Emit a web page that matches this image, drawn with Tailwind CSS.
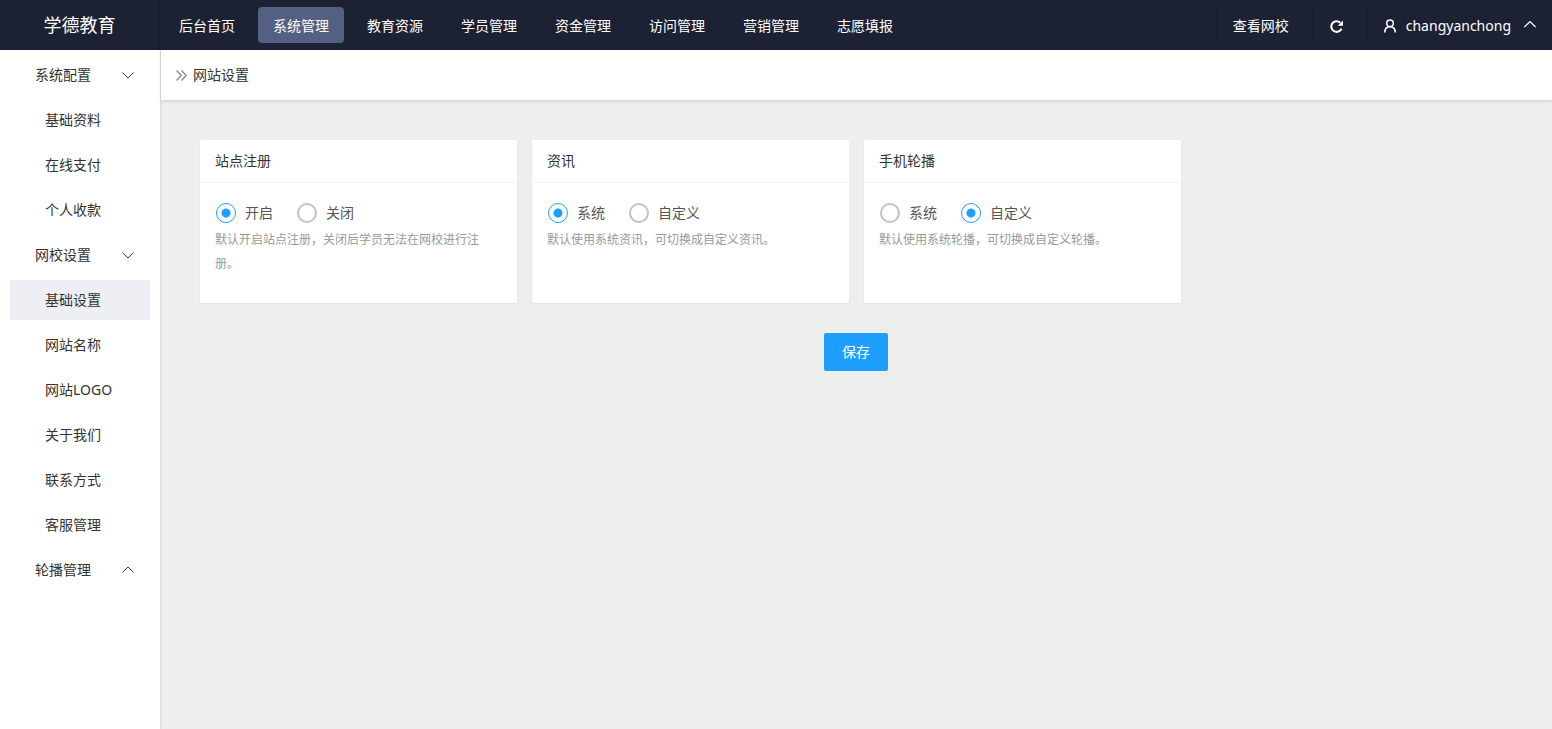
<!DOCTYPE html>
<html lang="zh-CN">
<head>
<meta charset="utf-8">
<meta name="viewport" content="width=device-width, initial-scale=1">
<title>网站设置</title>
<script src="https://cdn.jsdelivr.net/npm/@tailwindcss/browser@4"></script>
</head>
<body class="flex min-h-screen flex-col bg-[#eee] font-['Noto_Sans','Noto_Sans_CJK_SC',sans-serif] text-sm text-[#333]">
<header class="flex h-[50px] items-stretch bg-[#1d2134] text-white">
  <a href="#" class="flex w-40 shrink-0 items-center justify-center border-r border-[#181c2c] text-lg">学德教育</a>
  <nav class="flex flex-1 items-center gap-2 pl-1">
    <a href="#" class="flex h-9 items-center rounded-sm px-[15px] pt-[2px]">后台首页</a>
    <a href="#" aria-current="page" class="flex h-9 items-center rounded-sm bg-[#536081] px-[15px] pt-[2px]">系统管理</a>
    <a href="#" class="flex h-9 items-center rounded-sm px-[15px] pt-[2px]">教育资源</a>
    <a href="#" class="flex h-9 items-center rounded-sm px-[15px] pt-[2px]">学员管理</a>
    <a href="#" class="flex h-9 items-center rounded-sm px-[15px] pt-[2px]">资金管理</a>
    <a href="#" class="flex h-9 items-center rounded-sm px-[15px] pt-[2px]">访问管理</a>
    <a href="#" class="flex h-9 items-center rounded-sm px-[15px] pt-[2px]">营销管理</a>
    <a href="#" class="flex h-9 items-center rounded-sm px-[15px] pt-[2px]">志愿填报</a>
  </nav>
  <div class="flex items-center">
    <a href="#" class="flex h-9 items-center border-l border-[#181c2c] pl-[15px] pr-6 pt-[2px]">查看网校</a>
    <button type="button" aria-label="刷新" class="flex h-9 items-center border-l border-[#181c2c] pl-4 pr-6 pt-[2px]">
      <svg class="size-[13px]" viewBox="0 0 14 14" fill="none" stroke="currentColor" stroke-width="2.200"><path d="M12.400 9.200A5.700 5.700 0 1 1 11 2.900"/><path d="M14 .6V6.200H8.400Z" fill="currentColor" stroke="none"/></svg>
    </button>
    <button type="button" class="flex h-9 items-center border-l border-[#181c2c] px-4 pt-[2px]">
      <svg class="mr-[10px] h-[14px] w-3" viewBox="0 0 12 14" fill="none" stroke="currentColor" stroke-width="1.500"><circle cx="6" cy="4.200" r="3.300"/><path d="M.8 13.400C.8 9.800 3 7.700 6 7.700S11.200 9.800 11.200 13.400"/></svg>
      <span>changyanchong</span>
      <svg class="ml-[13px] h-[14px] w-3" viewBox="0 0 12 14" fill="none" stroke="currentColor" stroke-width="1.200"><path d="M.4 8 6 2.500l5.600 5.500"/></svg>
    </button>
  </div>
</header>
<div class="flex flex-1">
  <aside class="w-40 shrink-0 bg-white px-[10px] pt-[5px] shadow-[1px_0_2px_rgba(0,0,0,0.1)]">
    <nav class="flex flex-col gap-[5px]">
      <button type="button" aria-expanded="true" class="flex h-10 items-center justify-between pl-[25px] pr-4">系统配置
        <svg class="h-[14px] w-3" viewBox="0 0 12 14" fill="none" stroke="currentColor"><path d="M.4 4.500 6 10l5.600-5.500"/></svg></button>
      <a href="#" class="flex h-10 items-center pl-[35px]">基础资料</a>
      <a href="#" class="flex h-10 items-center pl-[35px]">在线支付</a>
      <a href="#" class="flex h-10 items-center pl-[35px]">个人收款</a>
      <button type="button" aria-expanded="true" class="flex h-10 items-center justify-between pl-[25px] pr-4">网校设置
        <svg class="h-[14px] w-3" viewBox="0 0 12 14" fill="none" stroke="currentColor"><path d="M.4 4.500 6 10l5.600-5.500"/></svg></button>
      <a href="#" aria-current="page" class="flex h-10 items-center bg-[#eeeff4] pl-[35px]">基础设置</a>
      <a href="#" class="flex h-10 items-center pl-[35px]">网站名称</a>
      <a href="#" class="flex h-10 items-center pl-[35px]">网站LOGO</a>
      <a href="#" class="flex h-10 items-center pl-[35px]">关于我们</a>
      <a href="#" class="flex h-10 items-center pl-[35px]">联系方式</a>
      <a href="#" class="flex h-10 items-center pl-[35px]">客服管理</a>
      <button type="button" aria-expanded="false" class="flex h-10 items-center justify-between pl-[25px] pr-4">轮播管理
        <svg class="h-[14px] w-3" viewBox="0 0 12 14" fill="none" stroke="currentColor"><path d="M.4 9.500 6 4l5.600 5.500"/></svg></button>
    </nav>
  </aside>
  <main class="min-w-0 flex-1">
    <div class="ml-px flex h-[50px] items-center gap-[6px] bg-white pl-[15px] shadow-[0_1px_3px_rgba(0,0,0,0.15)]">
      <svg class="h-[11px] w-[11px]" viewBox="0 0 11 11" fill="none" stroke="#888" stroke-width="1.300"><path d="M.6.500 5.200 5.500.6 10.500M5.500.500 10.100 5.500 5.500 10.500"/></svg>
      <h1>网站设置</h1>
    </div>
    <form class="px-10 pt-10">
      <div class="grid max-w-[981px] grid-cols-3 gap-[15px]">
        <section class="rounded-xs bg-white shadow-[0_1px_2px_rgba(0,0,0,0.05)]">
          <h2 class="flex h-[43px] items-center border-b border-[#f3f3f3] px-[15px]">站点注册</h2>
          <div class="min-h-[120px] px-[15px] pt-[15px]">
            <div class="flex h-[30px] items-center gap-6 pl-px text-[#555]">
              <label class="flex items-center gap-[9px]"><input type="radio" name="register" checked class="size-5 appearance-none rounded-full border-2 border-[#c2c2c2] checked:border checked:border-[#1e9fff] checked:bg-[radial-gradient(circle,#1e9fff_4px,transparent_5px)]">开启</label>
              <label class="flex items-center gap-[9px]"><input type="radio" name="register" class="size-5 appearance-none rounded-full border-2 border-[#c2c2c2] checked:border checked:border-[#1e9fff] checked:bg-[radial-gradient(circle,#1e9fff_4px,transparent_5px)]">关闭</label>
            </div>
            <p class="text-xs leading-6 text-[#999]">默认开启站点注册，关闭后学员无法在网校进行注册。</p>
          </div>
        </section>
        <section class="rounded-xs bg-white shadow-[0_1px_2px_rgba(0,0,0,0.05)]">
          <h2 class="flex h-[43px] items-center border-b border-[#f3f3f3] px-[15px]">资讯</h2>
          <div class="min-h-[120px] px-[15px] pt-[15px]">
            <div class="flex h-[30px] items-center gap-6 pl-px text-[#555]">
              <label class="flex items-center gap-[9px]"><input type="radio" name="news" checked class="size-5 appearance-none rounded-full border-2 border-[#c2c2c2] checked:border checked:border-[#1e9fff] checked:bg-[radial-gradient(circle,#1e9fff_4px,transparent_5px)]">系统</label>
              <label class="flex items-center gap-[9px]"><input type="radio" name="news" class="size-5 appearance-none rounded-full border-2 border-[#c2c2c2] checked:border checked:border-[#1e9fff] checked:bg-[radial-gradient(circle,#1e9fff_4px,transparent_5px)]">自定义</label>
            </div>
            <p class="text-xs leading-6 text-[#999]">默认使用系统资讯，可切换成自定义资讯。</p>
          </div>
        </section>
        <section class="rounded-xs bg-white shadow-[0_1px_2px_rgba(0,0,0,0.05)]">
          <h2 class="flex h-[43px] items-center border-b border-[#f3f3f3] px-[15px]">手机轮播</h2>
          <div class="min-h-[120px] px-[15px] pt-[15px]">
            <div class="flex h-[30px] items-center gap-6 pl-px text-[#555]">
              <label class="flex items-center gap-[9px]"><input type="radio" name="carousel" class="size-5 appearance-none rounded-full border-2 border-[#c2c2c2] checked:border checked:border-[#1e9fff] checked:bg-[radial-gradient(circle,#1e9fff_4px,transparent_5px)]">系统</label>
              <label class="flex items-center gap-[9px]"><input type="radio" name="carousel" checked class="size-5 appearance-none rounded-full border-2 border-[#c2c2c2] checked:border checked:border-[#1e9fff] checked:bg-[radial-gradient(circle,#1e9fff_4px,transparent_5px)]">自定义</label>
            </div>
            <p class="text-xs leading-6 text-[#999]">默认使用系统轮播，可切换成自定义轮播。</p>
          </div>
        </section>
      </div>
      <div class="mt-[30px] flex justify-center">
        <button type="button" class="h-[38px] rounded-xs bg-[#1e9fff] px-[18px] text-white">保存</button>
      </div>
    </form>
  </main>
</div>
</body>
</html>
